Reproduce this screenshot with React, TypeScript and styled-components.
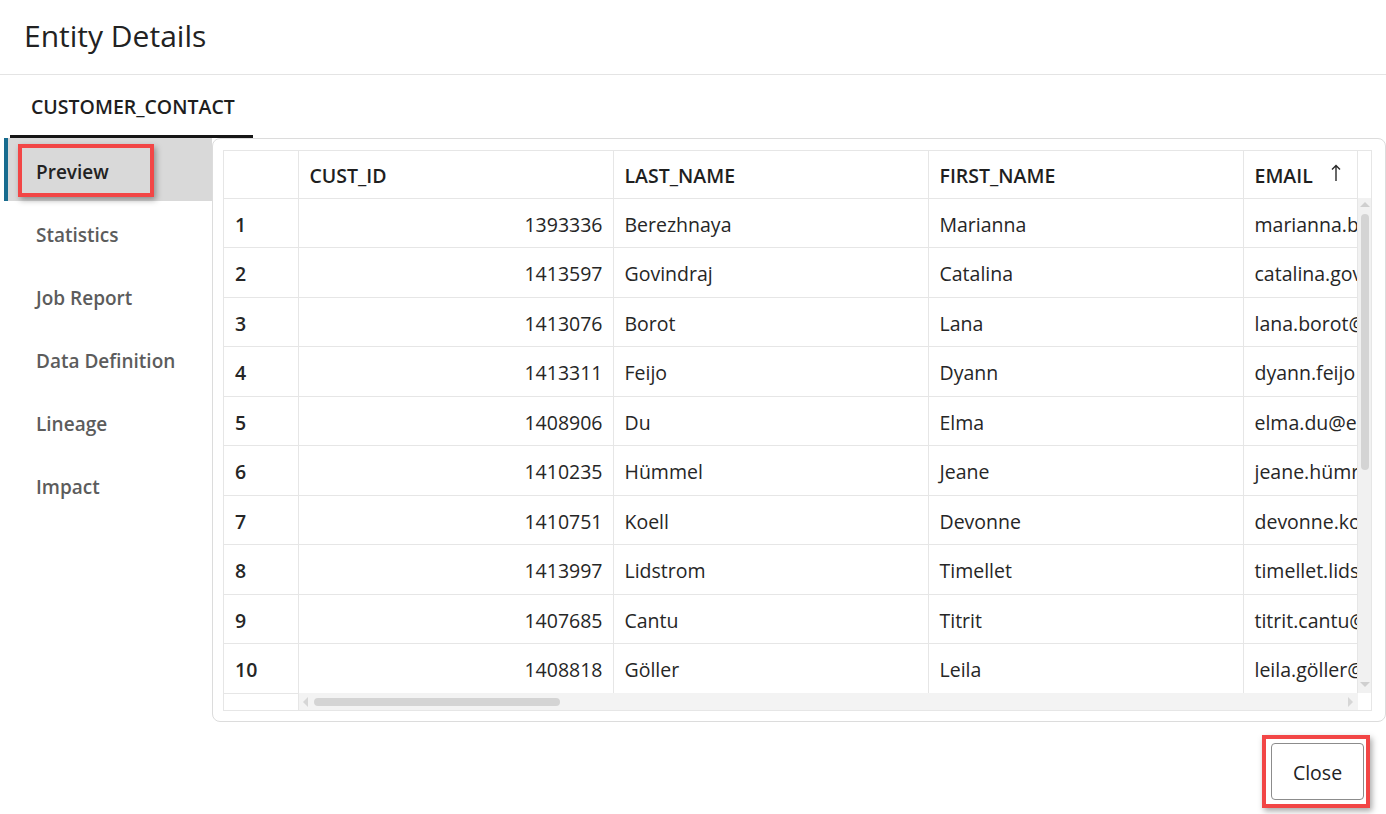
import React from "react";
import styled, { createGlobalStyle, css } from "styled-components";

const GlobalStyle = createGlobalStyle`
  html, body { margin: 0; padding: 0; background: #ffffff; }
  body {
    font-family: "Open Sans", "Noto Sans", "Liberation Sans", sans-serif;
    color: #222222;
    width: 1386px;
    height: 814px;
    overflow: hidden;
  }
  * { box-sizing: border-box; }
`;

const Dialog = styled.div`
  width: 1386px;
  height: 814px;
  display: flex;
  flex-direction: column;
  background: #fff;
`;

const Header = styled.header`
  height: 75px;
  border-bottom: 1px solid #e4e4e4;
  display: flex;
  align-items: center;
  padding: 0 0 4px 24px;
`;

const Title = styled.h1`
  margin: 0;
  font-size: 30px;
  font-weight: 400;
  color: #222;
`;

const TabStrip = styled.div`
  height: 63px;
  display: flex;
  align-items: flex-end;
  padding-left: 10px;
`;

const Tab = styled.div<{ $active?: boolean }>`
  width: 243px;
  height: 63px;
  display: flex;
  align-items: center;
  padding: 2px 0 0 21px;
  font-size: 19.5px;
  font-weight: 600;
  color: #1e1e1e;
  border-bottom: 3px solid ${(p) => (p.$active ? "#161616" : "transparent")};
`;

const Body = styled.div`
  display: flex;
  height: 583px;
`;

const SideNav = styled.nav`
  width: 212px;
  padding-left: 4px;
  display: flex;
  flex-direction: column;
`;

const NavItem = styled.div<{ $active?: boolean }>`
  position: relative;
  height: 63px;
  display: flex;
  align-items: center;
  padding: 4px 0 0 32px;
  font-size: 19px;
  font-weight: 600;
  color: ${(p) => (p.$active ? "#222" : "#5c5c5c")};
  ${(p) =>
    p.$active &&
    css`
      background: #d9d9d9;
      border-left: 4px solid #176b8e;
      padding-left: 28px;
    `}
`;

const Highlight = styled.span<{ $top: number; $left: number; $w: number; $h: number }>`
  position: absolute;
  top: ${(p) => p.$top}px;
  left: ${(p) => p.$left}px;
  width: ${(p) => p.$w}px;
  height: ${(p) => p.$h}px;
  border: 4px solid #f24646;
  box-shadow: 2px 3px 6px rgba(0, 0, 0, 0.35);
  pointer-events: none;
`;

const Panel = styled.section`
  width: 1174px;
  height: 584px;
  border: 1px solid #dcdcdc;
  border-radius: 8px;
  padding: 11px 13px 10px 10px;
`;

const Frame = styled.div`
  width: 1149px;
  height: 561px;
  border: 1px solid #e6e6e6;
  display: grid;
  grid-template-columns: 1fr 13px;
  grid-template-rows: 1fr 17px;
  overflow: hidden;
`;

const ScrollArea = styled.div`
  overflow: hidden;
  grid-column: 1;
  grid-row: 1;
`;

const Table = styled.table`
  border-collapse: collapse;
  table-layout: fixed;
  width: 1134px;
`;

const Th = styled.th<{ $w?: number }>`
  ${(p) => p.$w && css`width: ${p.$w}px;`}
  height: 47px;
  text-align: left;
  font-size: 19.5px;
  font-weight: 600;
  color: #1f1f1f;
  padding: 2px 11px 0;
  border-right: 1px solid #e6e6e6;
  border-bottom: 1px solid #e6e6e6;
  white-space: nowrap;
  overflow: hidden;
`;

const HeadInner = styled.span`
  display: inline-flex;
  align-items: center;
  gap: 18px;
`;

const SortIcon = styled.svg`
  width: 10px;
  height: 18px;
  margin-top: -4px;
`;

const Td = styled.td<{ $num?: boolean; $idx?: boolean }>`
  height: 49.5px;
  font-size: 19.5px;
  font-weight: ${(p) => (p.$idx ? 600 : 400)};
  color: #262626;
  padding: 3px ${(p) => (p.$num ? "10px" : "0")} 0 11px;
  text-align: ${(p) => (p.$num ? "right" : "left")};
  border-right: 1px solid #e6e6e6;
  border-bottom: 1px solid #e6e6e6;
  white-space: nowrap;
  overflow: hidden;
`;

const VBar = styled.div`
  grid-column: 2;
  grid-row: 1;
  margin-top: 47px;
  background: #f1f1f1;
  position: relative;
  display: flex;
  flex-direction: column;
  align-items: center;
  padding-top: 4px;
`;

const Thumb = styled.div<{ $vertical?: boolean }>`
  background: #d4d4d4;
  border-radius: 5px;
  ${(p) =>
    p.$vertical
      ? css`
          width: 8px;
          height: 256px;
          margin-top: 7px;
        `
      : css`
          height: 8px;
          width: 246px;
          margin-left: 6px;
        `}
`;

const Arrow = styled.span<{ $dir: "up" | "down" | "left" | "right" }>`
  width: 0;
  height: 0;
  border: 5px solid transparent;
  ${(p) => p.$dir === "up" && css`border-bottom-color: #cfcfcf; border-top-width: 0;`}
  ${(p) => p.$dir === "down" && css`border-top-color: #cfcfcf; border-bottom-width: 0; position: absolute; bottom: 6px;`}
  ${(p) => p.$dir === "left" && css`border-right-color: #d6d6d6; border-left-width: 0;`}
  ${(p) => p.$dir === "right" && css`border-left-color: #d6d6d6; border-right-width: 0; position: absolute; right: 5px;`}
`;

const HRow = styled.div`
  grid-column: 1;
  grid-row: 2;
  display: flex;
`;

const HFrozen = styled.div`
  width: 75px;
  border-right: 1px solid #e6e6e6;
  border-top: 1px solid #e6e6e6;
`;

const HBar = styled.div`
  flex: 1;
  background: #f3f3f3;
  position: relative;
  display: flex;
  align-items: center;
  padding-left: 4px;
`;

const Corner = styled.div`
  grid-column: 2;
  grid-row: 2;
  background: #fff;
`;

const Footer = styled.footer`
  flex: 1;
  display: flex;
  justify-content: flex-end;
  align-items: flex-start;
  padding: 22px 22px 0 0;
`;

const ButtonWrap = styled.div`
  position: relative;
`;

const CloseButton = styled.button`
  width: 93px;
  height: 57px;
  border: 1px solid #8c8c8c;
  border-radius: 4px;
  background: #fff;
  font-family: inherit;
  font-size: 19.5px;
  color: #222;
  padding-top: 2px;
  cursor: pointer;
`;

const rows = [
  ["1393336", "Berezhnaya", "Marianna", "marianna.b"],
  ["1413597", "Govindraj", "Catalina", "catalina.gov"],
  ["1413076", "Borot", "Lana", "lana.borot@"],
  ["1413311", "Feijo", "Dyann", "dyann.feijo"],
  ["1408906", "Du", "Elma", "elma.du@e"],
  ["1410235", "Hümmel", "Jeane", "jeane.hümr"],
  ["1410751", "Koell", "Devonne", "devonne.ko"],
  ["1413997", "Lidstrom", "Timellet", "timellet.lids"],
  ["1407685", "Cantu", "Titrit", "titrit.cantu@"],
  ["1408818", "Göller", "Leila", "leila.göller@"],
];

const navItems = ["Preview", "Statistics", "Job Report", "Data Definition", "Lineage", "Impact"];

export default function App() {
  return (
    <>
      <GlobalStyle />
      <Dialog>
        <Header>
          <Title>Entity Details</Title>
        </Header>
        <TabStrip>
          <Tab $active>CUSTOMER_CONTACT</Tab>
        </TabStrip>
        <Body>
          <SideNav>
            {navItems.map((n, i) => (
              <NavItem key={n} $active={i === 0}>
                {n}
                {i === 0 && <Highlight $top={6} $left={10} $w={136} $h={53} />}
              </NavItem>
            ))}
          </SideNav>
          <Panel>
            <Frame>
              <ScrollArea>
                <Table>
                  <thead>
                    <tr>
                      <Th $w={74}></Th>
                      <Th $w={315}>CUST_ID</Th>
                      <Th $w={315}>LAST_NAME</Th>
                      <Th $w={315}>FIRST_NAME</Th>
                      <Th>
                        <HeadInner>
                          EMAIL
                          <SortIcon viewBox="0 0 10 18">
                            <path d="M5 17V1.5M1 5.5L5 1.5L9 5.5" fill="none" stroke="#2a2a2a" strokeWidth="1.4" />
                          </SortIcon>
                        </HeadInner>
                      </Th>
                    </tr>
                  </thead>
                  <tbody>
                    {rows.map((r, i) => (
                      <tr key={i}>
                        <Td $idx>{i + 1}</Td>
                        <Td $num>{r[0]}</Td>
                        <Td>{r[1]}</Td>
                        <Td>{r[2]}</Td>
                        <Td>{r[3]}</Td>
                      </tr>
                    ))}
                  </tbody>
                </Table>
              </ScrollArea>
              <VBar>
                <Arrow $dir="up" />
                <Thumb $vertical />
                <Arrow $dir="down" />
              </VBar>
              <HRow>
                <HFrozen />
                <HBar>
                  <Arrow $dir="left" />
                  <Thumb />
                  <Arrow $dir="right" />
                </HBar>
              </HRow>
              <Corner />
            </Frame>
          </Panel>
        </Body>
        <Footer>
          <ButtonWrap>
            <CloseButton>Close</CloseButton>
            <Highlight $top={-8} $left={-9} $w={108} $h={73} />
          </ButtonWrap>
        </Footer>
      </Dialog>
    </>
  );
}
